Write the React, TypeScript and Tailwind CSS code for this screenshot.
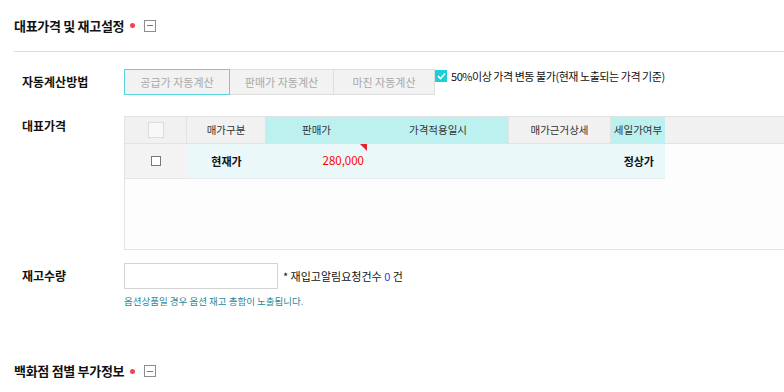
import React from "react";

const KR = "font-['Noto_Sans_CJK_KR','Noto_Sans',sans-serif]";

function SectionTitle({ title }: { title: string }) {
  return (
    <div className="flex items-center gap-[6px]">
      <span className="text-[13px] font-bold text-[#111] tracking-[-0.3px]">{title}</span>
      <span className="w-[5px] h-[5px] rounded-full bg-[#f0464f]" />
      <span className="ml-[3px] w-[12px] h-[12px] border border-[#8c8c8c] flex items-center justify-center bg-white">
        <span className="w-[6px] h-px bg-[#777]" />
      </span>
    </div>
  );
}

const COLS = [
  { label: "매가구분", w: "w-[79px]", head: "bg-[#f1f1f1]" },
  { label: "판매가", w: "w-[102px]", head: "bg-[#bdf1f0]" },
  { label: "가격적용일시", w: "w-[141px]", head: "bg-[#bdf1f0]" },
  { label: "매가근거상세", w: "w-[102px]", head: "bg-[#f1f1f1]" },
  { label: "세일가여부", w: "w-[54px]", head: "bg-[#bdf1f0]" },
];

export default function App() {
  return (
    <div className={`w-[784px] h-[392px] overflow-hidden bg-white ${KR}`}>
      {/* Section header */}
      <div className="h-[51px] pl-[14px] flex items-center">
        <SectionTitle title="대표가격 및 재고설정" />
      </div>
      <div className="ml-[14px] border-b border-[#dcdcdc]" />

      {/* 자동계산방법 */}
      <div className="flex items-start mt-[17px] pl-[22px]">
        <div className="w-[102px] shrink-0 h-[26px] flex items-center text-[12px] font-bold text-[#111]">자동계산방법</div>
        <div className="flex shrink-0">
          <button className="w-[106px] h-[26px] border border-[#55d6da] bg-[#f2f2f2] text-[11px] text-[#a9a9a9]">공급가 자동계산</button>
          <button className="w-[104px] h-[26px] border border-l-0 border-[#dedede] bg-[#f2f2f2] text-[11px] text-[#a9a9a9]">판매가 자동계산</button>
          <button className="w-[101px] h-[26px] border border-l-0 border-[#dedede] bg-[#f2f2f2] text-[11px] text-[#a9a9a9]">마진 자동계산</button>
        </div>
        <div className="flex items-center gap-[4px] h-[14px] shrink-0">
          <span className="w-[12px] h-[12px] bg-[#1fcfd6] flex items-center justify-center">
            <svg width="9" height="8" viewBox="0 0 9 8">
              <path d="M1 4.2 L3.5 6.5 L8 1.5" fill="none" stroke="#fff" strokeWidth="1.6" />
            </svg>
          </span>
          <span className="text-[11px] text-[#111] tracking-[-0.45px]">50%이상 가격 변동 불가(현재 노출되는 가격 기준)</span>
        </div>
      </div>

      {/* 대표가격 */}
      <div className="flex items-start mt-[21px] pl-[22px]">
        <div className="w-[102px] shrink-0 pt-[1px] text-[12px] font-bold text-[#111]">대표가격</div>
        <div className="w-[680px] shrink-0 h-[134px] border border-[#e2e2e2] bg-[#fdfdfd]">
          <div className="flex h-[27px] border-b border-[#e2e2e2] bg-[#f1f1f1]">
            <div className="w-[62px] flex items-center justify-center border-r border-[#e2e2e2]">
              <span className="w-[16px] h-[16px] border border-[#dcdcdc] bg-[#f8f8f8]" />
            </div>
            {COLS.map((c, i) => (
              <div
                key={c.label}
                className={`${c.w} ${c.head} flex items-center justify-center text-[10.5px] text-[#333] ${i < COLS.length - 1 ? "border-r border-[#e2e2e2]" : ""}`}
              >
                {c.label}
              </div>
            ))}
          </div>
          <div className="flex h-[35px]">
            <div className="w-[62px] bg-[#f3f3f3] border-b border-[#e6e6e6] flex items-center justify-center">
              <span className="w-[10px] h-[10px] border border-[#777] bg-white" />
            </div>
            <div className="flex border-b border-[#e4eeef] bg-[#ebf8fa]">
              <div className="w-[79px] flex items-center justify-center text-[11px] font-bold text-[#111]">현재가</div>
              <div className="w-[102px] relative flex items-center justify-end pr-[4px] text-[11.5px] text-[#ff0000]">
                280,000
                <span className="absolute top-0 right-[1px] w-0 h-0 border-t-[7px] border-t-[#e8202a] border-l-[7px] border-l-transparent" />
              </div>
              <div className="w-[141px]" />
              <div className="w-[102px]" />
              <div className="w-[54px] flex items-center justify-end pr-[11px] text-[11px] font-bold text-[#111]">정상가</div>
            </div>
          </div>
        </div>
      </div>

      {/* 재고수량 */}
      <div className="flex items-start mt-[13px] pl-[22px]">
        <div className="w-[102px] shrink-0 h-[26px] flex items-center text-[12px] font-bold text-[#111]">재고수량</div>
        <div className="flex flex-col">
          <div className="flex items-center gap-[5px]">
            <div className="w-[154px] h-[26px] border border-[#d4d4d4] bg-white" />
            <span className="text-[11px] text-[#111]">
              * 재입고알림요청건수 <span className="text-[#1f3fe0]">0</span> 건
            </span>
          </div>
          <div className="mt-[5px] text-[9.5px] text-[#1f8b9c]">옵션상품일 경우 옵션 재고 총합이 노출됩니다.</div>
        </div>
      </div>

      {/* Next section */}
      <div className="mt-[53px] pl-[14px]">
        <SectionTitle title="백화점 점별 부가정보" />
      </div>
    </div>
  );
}
